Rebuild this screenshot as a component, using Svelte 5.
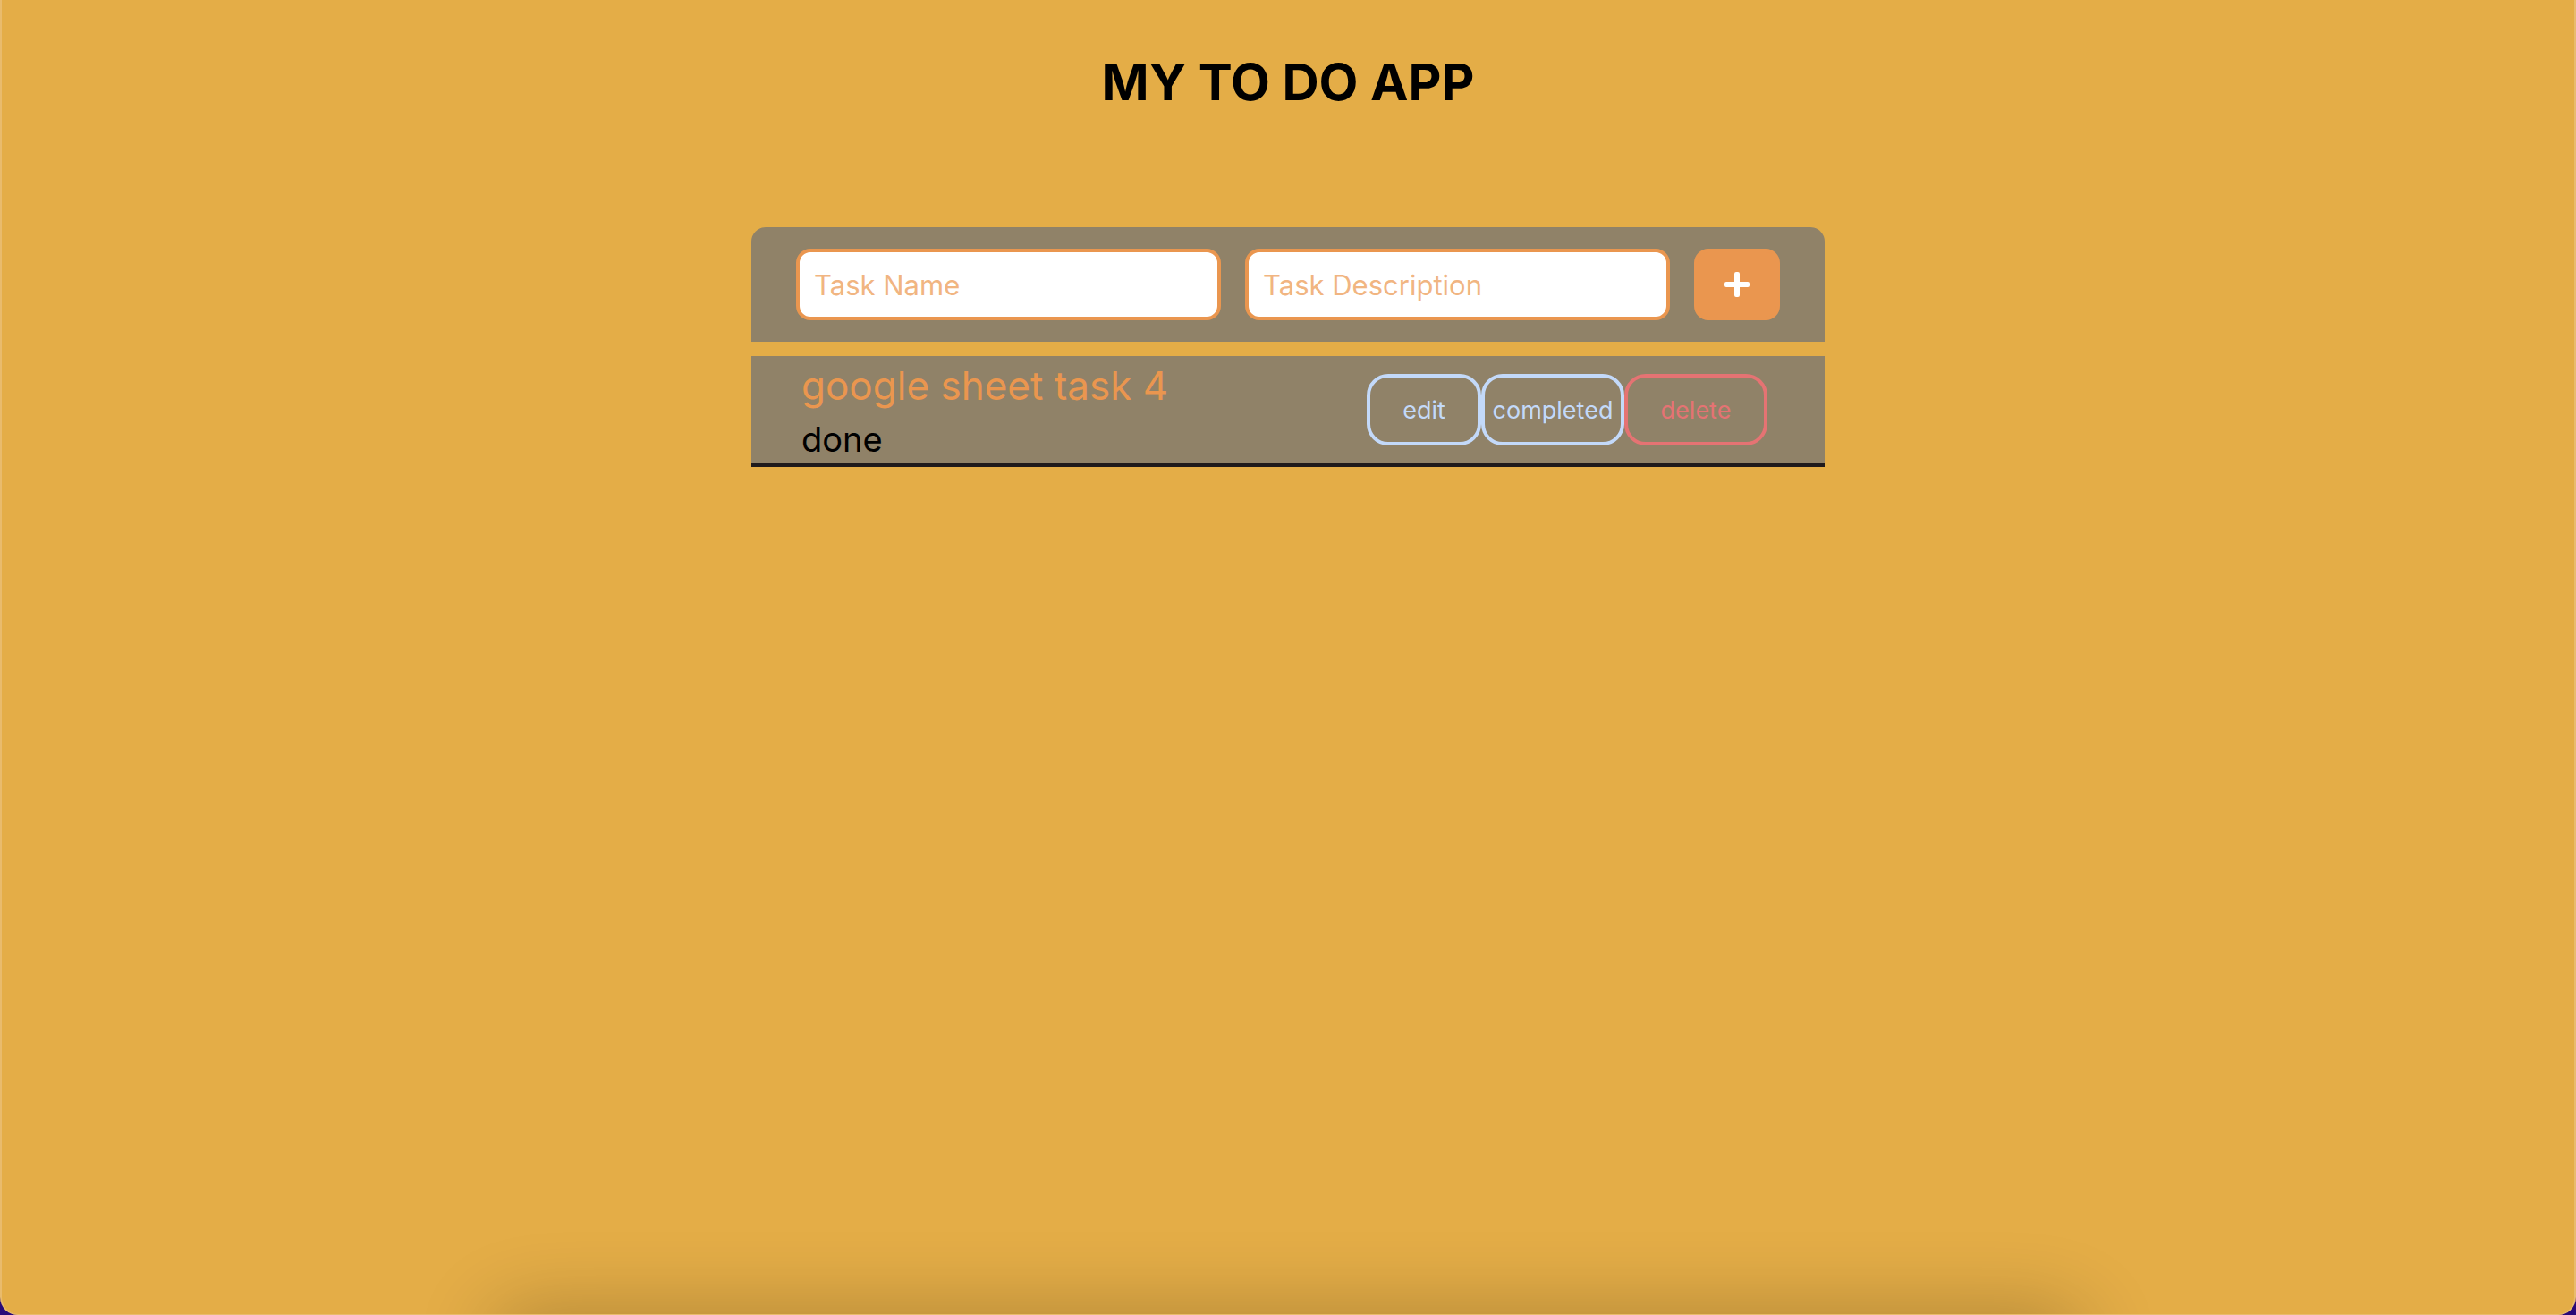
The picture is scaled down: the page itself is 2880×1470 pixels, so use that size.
<script>
  let taskName = $state('');
  let taskDescription = $state('');
  let tasks = $state([{ id: 4, name: 'google sheet task 4', description: 'done' }]);

  function addTask(event) {
    event.preventDefault();
    if (!taskName.trim()) return;
    tasks.push({ id: Date.now(), name: taskName, description: taskDescription });
    taskName = '';
    taskDescription = '';
  }

  function editTask(task) {
    taskName = task.name;
    taskDescription = task.description;
    removeTask(task.id);
  }

  function completeTask(task) {
    task.description = 'done';
  }

  function removeTask(id) {
    tasks = tasks.filter((task) => task.id !== id);
  }
</script>

<div class="window">
  <main class="app">
    <h1>MY TO DO APP</h1>

    <form class="task-form" onsubmit={addTask}>
      <input type="text" placeholder="Task Name" aria-label="Task Name" bind:value={taskName} />
      <input
        type="text"
        placeholder="Task Description"
        aria-label="Task Description"
        bind:value={taskDescription}
      />
      <button class="add" type="submit" aria-label="Add task">
        <svg viewBox="0 0 28 28" aria-hidden="true">
          <path
            d="M13 0h2a2 2 0 0 1 2 2v9h9a2 2 0 0 1 2 2v2a2 2 0 0 1-2 2h-9v9a2 2 0 0 1-2 2h-2a2 2 0 0 1-2-2v-9H2a2 2 0 0 1-2-2v-2a2 2 0 0 1 2-2h9V2a2 2 0 0 1 2-2z"
          />
        </svg>
      </button>
    </form>

    <ul class="tasks">
      {#each tasks as task (task.id)}
        <li>
          <div class="text">
            <h2>{task.name}</h2>
            <p>{task.description}</p>
          </div>
          <div class="actions">
            <button class="edit" type="button" onclick={() => editTask(task)}>edit</button>
            <button type="button" onclick={() => completeTask(task)}>completed</button>
            <button class="delete" type="button" onclick={() => removeTask(task.id)}>delete</button>
          </div>
        </li>
      {/each}
    </ul>
  </main>
  <div class="dock-shadow"></div>
</div>

<style>
  :global(body) {
    margin: 0;
    background: #2a0a78;
  }

  .window {
    --orange: #ea964f;
    --panel: #908268;
    position: relative;
    box-sizing: border-box;
    min-height: 100vh;
    overflow: hidden;
    background: #e4ad47;
    border: solid #e9bb6c;
    border-width: 0 2px 1px;
    border-radius: 0 0 20px 20px;
    font-family: Inter, 'Liberation Sans', sans-serif;
    color: #000;
  }

  .app {
    display: flex;
    flex-direction: column;
    width: 100%;
    max-width: 1200px;
    margin: 0 auto;
    padding-top: 56px;
  }

  h1 {
    margin: 0 0 126px;
    font-size: 57px;
    line-height: 72px;
    font-weight: 700;
    text-align: center;
  }

  .task-form {
    display: flex;
    gap: 27px;
    padding: 24px 50px;
    background: var(--panel);
    border-radius: 16px 16px 0 0;
  }

  input,
  button {
    box-sizing: border-box;
    height: 80px;
    border: 4px solid;
    font-family: inherit;
  }

  input {
    flex: 1;
    min-width: 0;
    padding: 0 16px;
    border-color: var(--orange);
    border-radius: 16px;
    background: #fff;
    color: var(--orange);
    font-size: 31px;
    outline: none;
  }

  input::placeholder {
    color: #f1b581;
    opacity: 1;
  }

  button {
    display: grid;
    place-items: center;
    width: 160px;
    padding: 0;
    border-color: #c3d9f9;
    border-radius: 24px;
    background: transparent;
    color: #c3d9f9;
    font-size: 27px;
    cursor: pointer;
  }

  .add {
    width: 96px;
    border-color: var(--orange);
    border-radius: 16px;
    background: var(--orange);
  }

  .add svg {
    width: 28px;
    height: 28px;
    fill: #fff;
  }

  .edit {
    width: 128px;
  }

  .delete {
    border-color: #e57373;
    color: #e57373;
  }

  .tasks {
    margin: 16px 0 0;
    padding: 0;
    list-style: none;
  }

  li {
    display: flex;
    align-items: center;
    justify-content: space-between;
    padding: 0 64px 0 56px;
    background: var(--panel);
    border-bottom: 4px solid #1f1a1c;
  }

  h2,
  p {
    margin: 0;
    font-weight: 400;
  }

  h2 {
    color: var(--orange);
    font-size: 44px;
    line-height: 66px;
  }

  p {
    font-size: 38px;
    line-height: 54px;
  }

  .actions {
    display: flex;
  }

  .dock-shadow {
    position: absolute;
    top: 100%;
    left: 19%;
    right: 19%;
    height: 80px;
    border-radius: 40px;
    box-shadow: 0 -4px 88px rgb(0 0 0 / 0.24);
    pointer-events: none;
  }
</style>
